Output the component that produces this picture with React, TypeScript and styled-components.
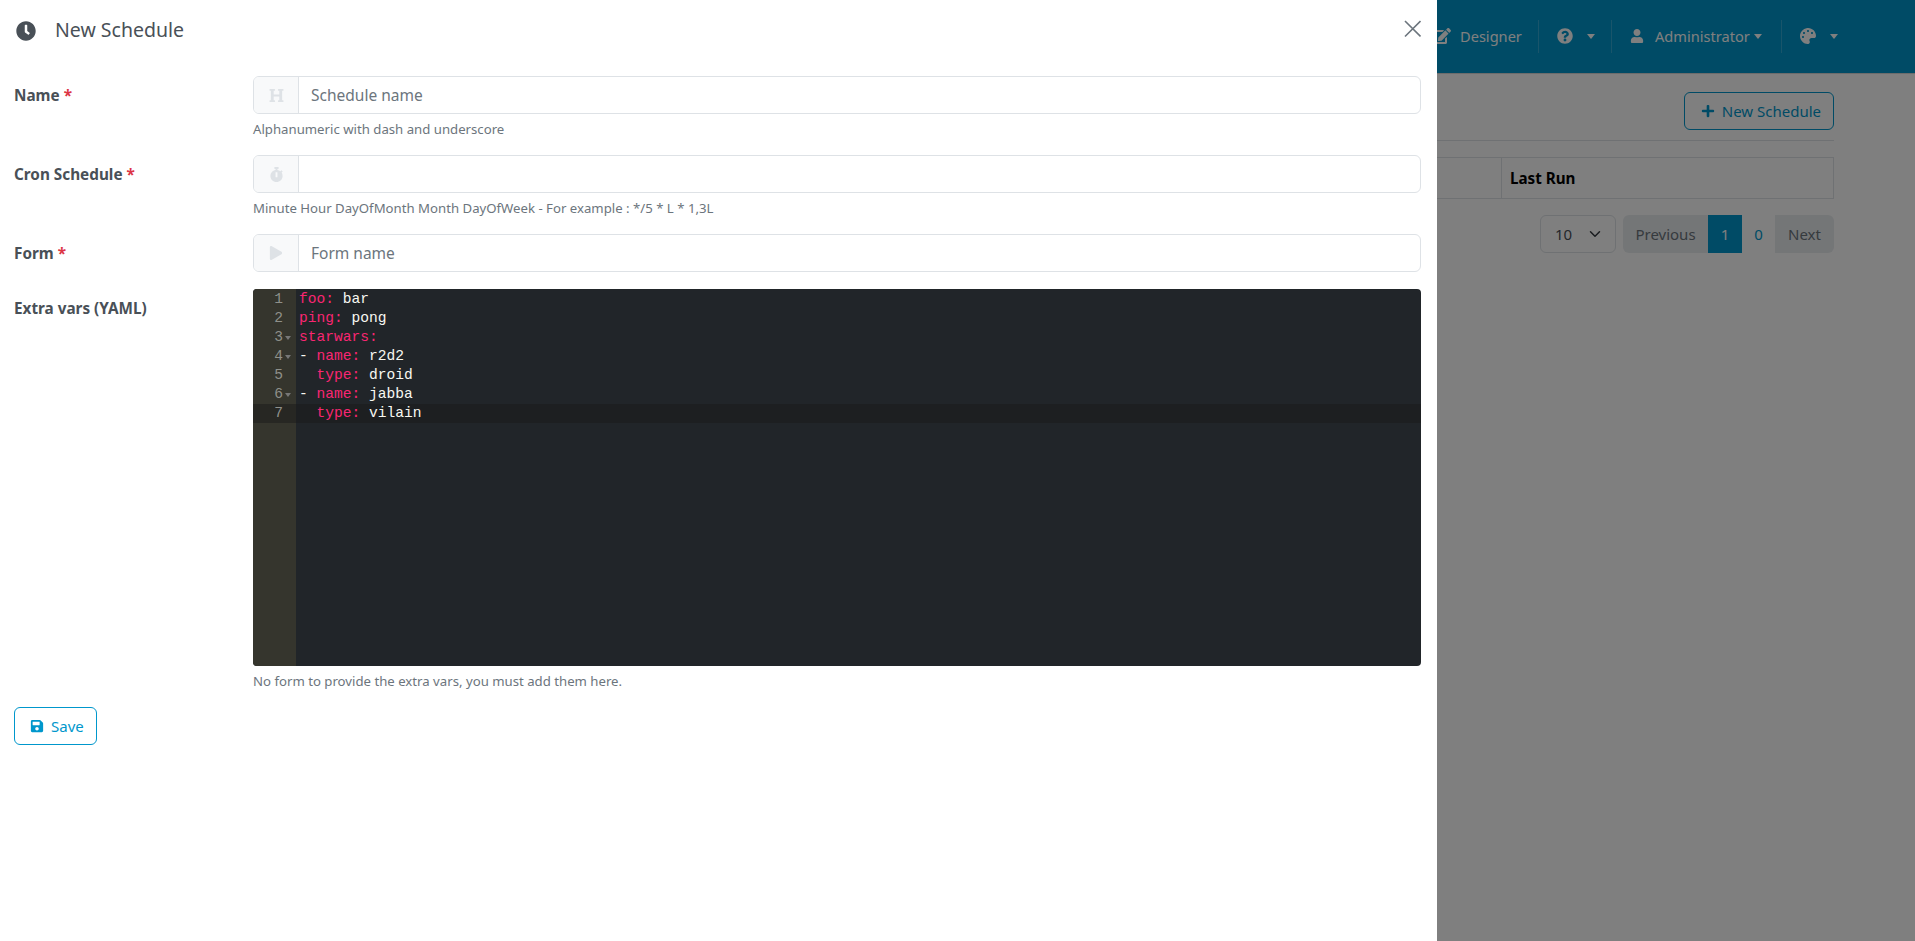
import React from "react";
import styled, { createGlobalStyle } from "styled-components";
import {
  FaClock,
  FaEdit,
  FaHeading,
  FaPalette,
  FaPlay,
  FaPlus,
  FaQuestionCircle,
  FaSave,
  FaStopwatch,
  FaUser,
} from "react-icons/fa";

const primary = "#0097cc";
const font = `"Noto Sans", "Open Sans", sans-serif`;

const GlobalStyle = createGlobalStyle`
  html, body {
    margin: 0;
    height: 100%;
    overflow: hidden;
    background: #fff;
    font-family: ${font};
    font-size: 16px;
    color: #212529;
  }
  * { box-sizing: border-box; }
`;

const Page = styled.div`
  position: relative;
  width: 1915px;
  height: 941px;
  overflow: hidden;
`;

const Navbar = styled.nav`
  height: 74px;
  background: ${primary};
  display: flex;
  align-items: center;
  justify-content: flex-end;
  padding: 0 78px 1px 0;
  border-bottom: 1px solid #d8d8d8;
`;

const NavItem = styled.div<{ $first?: boolean; $width: number; $gap?: number }>`
  width: ${(p) => p.$width}px;
  height: 33px;
  display: flex;
  align-items: center;
  gap: ${(p) => p.$gap ?? 14}px;
  color: #fff;
  font-size: 14.6px;
  padding-left: ${(p) => (p.$first ? 0 : 18)}px;
  border-left: ${(p) => (p.$first ? "none" : "1px solid rgba(255,255,255,.2)")};
  svg { flex: none; }
`;

const Caret = styled.span<{ $pull?: number }>`
  width: 0;
  height: 0;
  margin-left: ${(p) => p.$pull ?? 0}px;
  border-top: 5px solid currentColor;
  border-left: 4.5px solid transparent;
  border-right: 4.5px solid transparent;
`;

const Main = styled.main`
  padding: 18px 81px 0 0;
`;

const Actions = styled.div`
  display: flex;
  justify-content: flex-end;
  padding-bottom: 10px;
  border-bottom: 1px solid #dee2e6;
`;

const OutlineButton = styled.button`
  height: 38px;
  display: inline-flex;
  align-items: center;
  gap: 7px;
  padding: 0 12px 0 15px;
  background: transparent;
  color: ${primary};
  border: 1px solid ${primary};
  border-radius: 6px;
  font-family: ${font};
  font-size: 15px;
`;

const NewButton = styled(OutlineButton)`
  padding-left: 16px;
`;

const TableHead = styled.div`
  margin-top: 16px;
  height: 42px;
  display: flex;
  justify-content: flex-end;
  border: 1px solid #dee2e6;
`;

const LastRun = styled.div`
  width: 332px;
  display: flex;
  align-items: center;
  padding-left: 8px;
  border-left: 1px solid #dee2e6;
  font-weight: 700;
  font-size: 15.2px;
  color: #000;
`;

const Footer = styled.div`
  margin-top: 16px;
  display: flex;
  justify-content: flex-end;
  gap: 7px;
`;

const PageSize = styled.div`
  width: 76px;
  height: 38px;
  display: flex;
  align-items: center;
  justify-content: space-between;
  padding: 0 14px;
  border: 1px solid #dee2e6;
  border-radius: 6px;
  color: #495057;
  font-size: 15px;
`;

const Pager = styled.div`
  display: flex;
  height: 38px;
  border-radius: 6px;
  overflow: hidden;
`;

const PagerItem = styled.div<{ $kind: "muted" | "active" | "plain"; $width: number }>`
  width: ${(p) => p.$width}px;
  display: flex;
  align-items: center;
  justify-content: center;
  font-size: 15px;
  background: ${(p) =>
    p.$kind === "active" ? primary : p.$kind === "muted" ? "#e9ecef" : "#fff"};
  color: ${(p) =>
    p.$kind === "active" ? "#fff" : p.$kind === "muted" ? "#6c757d" : primary};
`;

const Backdrop = styled.div`
  position: absolute;
  inset: 0;
  background: rgba(0, 0, 0, 0.5);
`;

const Drawer = styled.aside`
  position: absolute;
  top: 0;
  left: 0;
  bottom: 0;
  width: 1437px;
  background: #fff;
  padding: 0 16px 0 14px;
`;

const DrawerHeader = styled.header`
  height: 76px;
  display: flex;
  align-items: flex-start;
  justify-content: space-between;
  padding: 16px 0 0 2px;
`;

const Title = styled.h2`
  margin: 0;
  display: flex;
  align-items: center;
  gap: 19px;
  font-size: 19.5px;
  font-weight: 400;
  line-height: 28px;
  height: 28px;
  color: #495057;
  svg { margin-top: 1px; }
`;

const Close = styled.button`
  padding: 0;
  margin-top: 3px;
  border: 0;
  background: none;
  width: 19px;
  height: 19px;
  color: #6c757d;
`;

const Row = styled.div<{ $gap: number }>`
  display: grid;
  grid-template-columns: 239px 1fr;
  margin-bottom: ${(p) => p.$gap}px;
`;

const Label = styled.label`
  padding-top: 7px;
  font-size: 15.3px;
  line-height: 24px;
  font-weight: 700;
  color: #495057;
`;

const Required = styled.span`
  color: #dc3545;
`;

const InputGroup = styled.div`
  display: flex;
  height: 38px;
  border: 1px solid #dee2e6;
  border-radius: 6px;
  overflow: hidden;
`;

const Addon = styled.span`
  width: 45px;
  flex: none;
  display: flex;
  align-items: center;
  justify-content: center;
  background: #f8f9fa;
  border-right: 1px solid #dee2e6;
  color: #dee2e6;
`;

const Placeholder = styled.span`
  padding-left: 12px;
  display: flex;
  align-items: center;
  color: #6c757d;
  font-size: 15.5px;
`;

const Help = styled.div`
  margin-top: 5px;
  font-size: 13.2px;
  line-height: 21px;
  color: #6c757d;
`;

const Editor = styled.div`
  height: 377px;
  display: flex;
  background: #212529;
  border-radius: 4px;
  overflow: hidden;
  font-family: "Liberation Mono", monospace;
  font-size: 14.6px;
  line-height: 19px;
`;

const Gutter = styled.div`
  width: 43px;
  flex: none;
  padding-top: 1px;
  background: #35352d;
  color: #8f908a;
`;

const GutterLine = styled.div<{ $active?: boolean }>`
  position: relative;
  height: 19px;
  padding-right: 13px;
  text-align: right;
  background: ${(p) => (p.$active ? "#272723" : "transparent")};
`;

const Fold = styled.span`
  position: absolute;
  right: 5px;
  top: 8px;
  border-top: 4px solid #777;
  border-left: 3px solid transparent;
  border-right: 3px solid transparent;
`;

const Code = styled.div`
  flex: 1;
  padding-top: 1px;
`;

const CodeLine = styled.div<{ $active?: boolean }>`
  height: 19px;
  padding-left: 3px;
  white-space: pre;
  color: #f8f8f2;
  background: ${(p) => (p.$active ? "#1d1f21" : "transparent")};
`;

const Key = styled.span`
  color: #f92672;
`;

const SaveButton = styled(OutlineButton)`
  margin-top: 15px;
  background: #fff;
  padding: 0 12px 0 15px;
`;

const yamlLines: { prefix?: string; key: string; value?: string; fold?: boolean }[] = [
  { key: "foo:", value: " bar" },
  { key: "ping:", value: " pong" },
  { key: "starwars:", fold: true },
  { prefix: "- ", key: "name:", value: " r2d2", fold: true },
  { prefix: "  ", key: "type:", value: " droid" },
  { prefix: "- ", key: "name:", value: " jabba", fold: true },
  { prefix: "  ", key: "type:", value: " vilain" },
];

export default function App() {
  return (
    <Page>
      <GlobalStyle />
      <Navbar>
        <NavItem $first $width={105} $gap={9}>
          <FaEdit size={18} />
          Designer
        </NavItem>
        <NavItem $width={73}>
          <FaQuestionCircle size={16} />
          <Caret />
        </NavItem>
        <NavItem $width={170} $gap={11}>
          <FaUser size={14} />
          Administrator
          <Caret $pull={-7} />
        </NavItem>
        <NavItem $width={56}>
          <FaPalette size={16} />
          <Caret />
        </NavItem>
      </Navbar>

      <Main>
        <Actions>
          <NewButton>
            <FaPlus size={14} />
            New Schedule
          </NewButton>
        </Actions>
        <TableHead>
          <LastRun>Last Run</LastRun>
        </TableHead>
        <Footer>
          <PageSize>
            10
            <svg width="12" height="12" viewBox="0 0 16 16" fill="none" stroke="#343a40" strokeWidth="2" strokeLinecap="round" strokeLinejoin="round">
              <path d="M2 5l6 6 6-6" />
            </svg>
          </PageSize>
          <Pager>
            <PagerItem $kind="muted" $width={85}>Previous</PagerItem>
            <PagerItem $kind="active" $width={34}>1</PagerItem>
            <PagerItem $kind="plain" $width={33}>0</PagerItem>
            <PagerItem $kind="muted" $width={59}>Next</PagerItem>
          </Pager>
        </Footer>
      </Main>

      <Backdrop />

      <Drawer>
        <DrawerHeader>
          <Title>
            <FaClock size={20} />
            New Schedule
          </Title>
          <Close aria-label="Close">
            <svg width="19" height="19" viewBox="0 0 19 19" fill="none" stroke="currentColor" strokeWidth="1.6">
              <path d="M3 2l15.5 15.5M18.5 2l-15.5 15.5" />
            </svg>
          </Close>
        </DrawerHeader>

        <Row $gap={15}>
          <Label>
            Name <Required>*</Required>
          </Label>
          <div>
            <InputGroup>
              <Addon>
                <FaHeading size={15} />
              </Addon>
              <Placeholder>Schedule name</Placeholder>
            </InputGroup>
            <Help>Alphanumeric with dash and underscore</Help>
          </div>
        </Row>

        <Row $gap={15}>
          <Label>
            Cron Schedule <Required>*</Required>
          </Label>
          <div>
            <InputGroup>
              <Addon>
                <FaStopwatch size={15} />
              </Addon>
            </InputGroup>
            <Help>Minute Hour DayOfMonth Month DayOfWeek - For example : */5 * L * 1,3L</Help>
          </div>
        </Row>

        <Row $gap={17}>
          <Label>
            Form <Required>*</Required>
          </Label>
          <InputGroup>
            <Addon>
              <FaPlay size={14} />
            </Addon>
            <Placeholder>Form name</Placeholder>
          </InputGroup>
        </Row>

        <Row $gap={0}>
          <Label>Extra vars (YAML)</Label>
          <div>
            <Editor>
              <Gutter>
                {yamlLines.map((line, i) => (
                  <GutterLine key={i} $active={i === 6}>
                    {i + 1}
                    {line.fold && <Fold />}
                  </GutterLine>
                ))}
              </Gutter>
              <Code>
                {yamlLines.map((line, i) => (
                  <CodeLine key={i} $active={i === 6}>
                    {line.prefix}
                    <Key>{line.key}</Key>
                    {line.value}
                  </CodeLine>
                ))}
              </Code>
            </Editor>
            <Help>No form to provide the extra vars, you must add them here.</Help>
          </div>
        </Row>

        <SaveButton>
          <FaSave size={14} />
          Save
        </SaveButton>
      </Drawer>
    </Page>
  );
}
